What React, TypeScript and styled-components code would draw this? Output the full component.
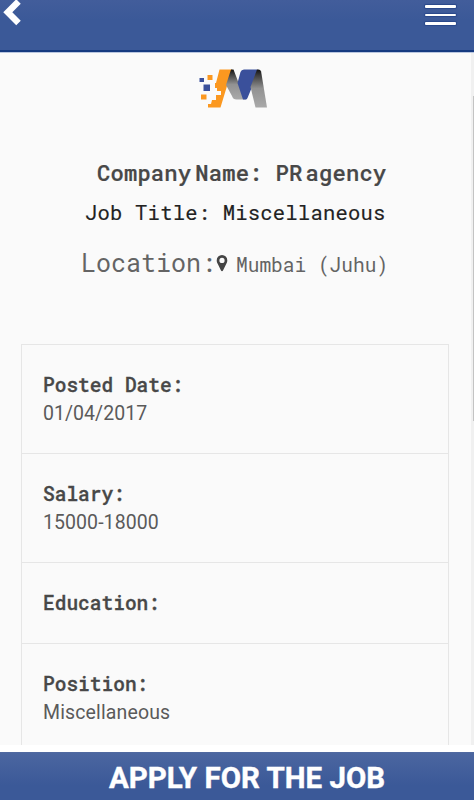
import styled, { createGlobalStyle } from "styled-components";

const colors = {
  page: "#fafafa",
  blue: "#3b5998",
  border: "#e6e6e6",
  text: "#484848",
  value: "#5a5a5a",
};

const JOB_DETAILS = [
  { label: "Posted Date:", value: "01/04/2017", spacing: "0.04px" },
  { label: "Salary:", value: "15000-18000", spacing: "0.07px" },
  { label: "Education:", value: "", spacing: "0px" },
  { label: "Position:", value: "Miscellaneous", spacing: "0.13px" },
];

const GlobalStyle = createGlobalStyle`
  * {
    box-sizing: border-box;
  }

  body {
    margin: 0;
    background-color: white;
    font-family: Roboto, sans-serif;
  }
`;

const Container = styled.div`
  width: 100%;
  height: 800px;
  display: flex;
  flex-direction: column;
  overflow: hidden;
`;

const Header = styled.header`
  height: 53px;
  flex-shrink: 0;
  display: flex;
  align-items: flex-start;
  justify-content: space-between;
  padding-right: 18px;
  background: linear-gradient(#425d9b, ${colors.blue} 20px);
  border-bottom: 1px solid #b9c6df;
  box-shadow: inset 0 -2px 0 #153a80;
`;

const MenuButton = styled.div`
  width: 31px;
  display: flex;
  flex-direction: column;
  gap: 6px;
  padding-top: 5px;
`;

const MenuLine = styled.span`
  height: 2.5px;
  border-radius: 1px;
  background-color: white;
  box-shadow: 0 0 1px 1px #2a488a;
`;

const Main = styled.main`
  height: 692px;
  flex-shrink: 0;
  display: flex;
  overflow: hidden;
  background-color: ${colors.page};
`;

const Content = styled.div`
  width: 471px;
  padding: 0 22px 0 21px;
`;

const ScrollTrack = styled.div`
  width: 3px;
  padding: 43px 0 0 2px;
  background-color: #f0f0f0;
`;

const ScrollThumb = styled.div`
  height: 325px;
  background-color: #c3c3c3;
`;

const Summary = styled.section`
  height: 291px;
  display: flex;
  flex-direction: column;
  align-items: flex-start;
  padding-top: 14px;
  font-family: "Roboto Mono", "DejaVu Sans Mono", monospace;
  white-space: nowrap;
`;

const Logo = styled.svg`
  display: block;
  margin-left: 177px;
`;

const CompanyName = styled.h1`
  height: 30px;
  display: flex;
  margin: 49px 0 0 76px;
  color: ${colors.text};
  font-size: 22.2px;
  font-weight: 500;
  line-height: 30px;
  letter-spacing: 0.15px;
  -webkit-text-stroke: 0.2px ${colors.text};
`;

const Word = styled.span<{ $gap?: number }>`
  margin-right: ${({ $gap = 0 }) => $gap}px;
`;

const JobTitle = styled.h2`
  height: 30px;
  margin: 10px 0 0 64px;
  color: #222;
  font-size: 20.5px;
  font-weight: 400;
  line-height: 30px;
  letter-spacing: 0.22px;
  -webkit-text-stroke: 0.15px #222;
`;

const Location = styled.div`
  height: 36px;
  display: flex;
  align-items: baseline;
  margin: 17px 0 0 60px;
  color: #646464;
  line-height: 36px;
`;

const LocationLabel = styled.span`
  width: 135px;
  font-size: 25px;
`;

const Pin = styled.svg`
  margin-bottom: -1px;
`;

const Place = styled.span`
  margin-left: 8px;
  font-size: 19.5px;
`;

const DetailList = styled.ul`
  margin: 0;
  padding: 0;
  list-style: none;
  border: 1px solid ${colors.border};
`;

const DetailItem = styled.li`
  padding: 26px 21px;
  border-bottom: 1px solid ${colors.border};
`;

const DetailLabel = styled.p`
  height: 28px;
  margin: 0;
  color: ${colors.text};
  font-family: "Roboto Mono", "DejaVu Sans Mono", monospace;
  font-size: 19.5px;
  font-weight: 500;
  line-height: 28px;
  -webkit-text-stroke: 0.3px ${colors.text};
`;

const DetailValue = styled.p<{ $spacing: string }>`
  height: 28px;
  margin: 0;
  color: ${colors.value};
  font-size: 19.5px;
  line-height: 29px;
  letter-spacing: ${({ $spacing }) => $spacing};
`;

const ApplyButton = styled.button`
  width: 100%;
  height: 48px;
  flex-shrink: 0;
  margin-top: 7px;
  padding: 4px 0 0 20px;
  border: 0;
  border-top: 1px solid #5069a0;
  background: linear-gradient(#4b66a0, ${colors.blue} 32px);
  color: white;
  font-family: Roboto, sans-serif;
  font-size: 29.5px;
  font-weight: 700;
  line-height: 43px;
  white-space: nowrap;
  -webkit-text-stroke: 0.4px white;
`;

const BackIcon = () => (
  <svg width="24" height="28" viewBox="0 0 24 28">
    <path d="M18.5 1.5 7.8 12.2 18.5 23" fill="none" stroke="white" strokeWidth="6.4" />
  </svg>
);

const PinIcon = () => (
  <Pin width="12" height="18" viewBox="0 0 12 18">
    <path
      fill="#444"
      fillRule="evenodd"
      d="M6 1a5.3 5.3 0 0 0-5.3 5.4c0 1.6.6 2.5 1.1 3.6L5 16.6c.4.8 1.6.8 2 0L10.2 10c.5-1.1 1.1-2 1.1-3.6A5.3 5.3 0 0 0 6 1Zm0 2.8a2.6 2.6 0 1 1 0 5.2 2.6 2.6 0 0 1 0-5.2Z"
    />
  </Pin>
);

const CompanyLogo = () => (
  <Logo width="72" height="42" viewBox="198 67 72 42">
    <defs>
      <linearGradient id="fold" x1="0" y1="0" x2="0" y2="1">
        <stop offset="0" stopColor="#111" />
        <stop offset="0.15" stopColor="#3c3c3c" />
        <stop offset="0.5" stopColor="#929292" />
        <stop offset="1" stopColor="#a9a9a9" />
      </linearGradient>
    </defs>
    <path
      fill="#fb9820"
      d="M219.5 69.5H232L220.5 107.5H208v-3.5h3l1-4h4v-5h5v-4h-4v-3h-2v-5h1Z"
    />
    <path fill="#fb9820" d="M207.5 75h5v5h-5zM201 94.5h5.500v5H201z" />
    <path fill="#3a509b" d="M199.500 78H204v4h-4.500zM203.500 84.500h6.500v6.500h-6.500z" />
    <path fill="url(#fold)" d="M231 69.500h2.500L239 84 246 99.500H236.500q-3.500 0-4.500-3.500L226 85Z" />
    <path fill="#3a509b" d="M244 69.500H257.500L252 87 247.500 98q-.6 1.500-2 1.500H243L237.500 83 240.500 72q.8-2.500 3.500-2.500Z" />
    <path fill="url(#fold)" d="M257 69.500h1.500q2 0 2.600 2L267 107.500H255.500L250.500 87Z" />
  </Logo>
);

const App = () => {
  return (
    <Container>
      <GlobalStyle />
      <Header>
        <BackIcon />
        <MenuButton>
          <MenuLine />
          <MenuLine />
          <MenuLine />
        </MenuButton>
      </Header>
      <Main>
        <Content>
          <Summary>
            <CompanyLogo />
            <CompanyName>
              <Word $gap={4}>Company</Word>
              <Word $gap={13}>Name:</Word>
              <Word $gap={3}>PR</Word>
              <Word>agency</Word>
            </CompanyName>
            <JobTitle>Job Title: Miscellaneous</JobTitle>
            <Location>
              <LocationLabel>Location:</LocationLabel>
              <PinIcon />
              <Place>Mumbai (Juhu)</Place>
            </Location>
          </Summary>
          <DetailList>
            {JOB_DETAILS.map(({ label, value, spacing }) => (
              <DetailItem key={label}>
                <DetailLabel>{label}</DetailLabel>
                {value && <DetailValue $spacing={spacing}>{value}</DetailValue>}
              </DetailItem>
            ))}
          </DetailList>
        </Content>
        <ScrollTrack>
          <ScrollThumb />
        </ScrollTrack>
      </Main>
      <ApplyButton>APPLY FOR THE JOB</ApplyButton>
    </Container>
  );
};

export default App;
